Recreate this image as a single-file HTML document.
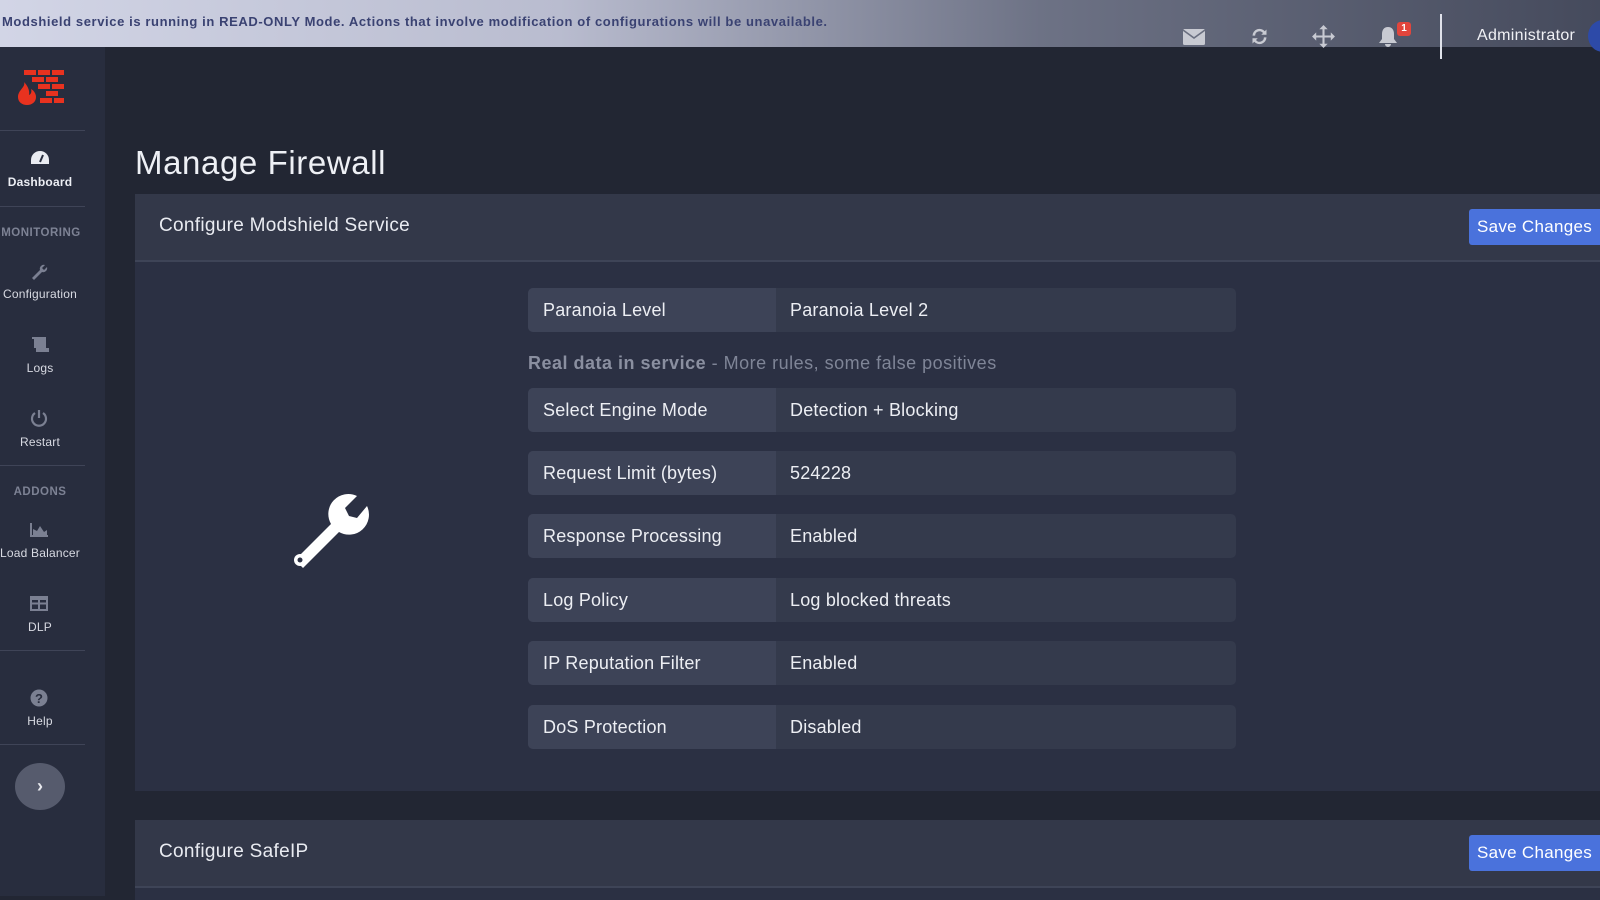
<!DOCTYPE html>
<html><head><meta charset="utf-8"><style>
*{margin:0;padding:0;box-sizing:border-box}
body{width:1600px;height:896px;overflow:hidden;background:#222633;font-family:"Liberation Sans",sans-serif;position:relative;color:#e8eaf0}
.top{position:absolute;left:0;top:0;width:1600px;height:47px;background:linear-gradient(90deg,#d2d5e6 0%,#b9bccf 35%,#6d7285 65%,#454a5c 100%)}
.banner{position:absolute;left:2px;top:14px;font-size:13px;font-weight:bold;color:#3a4272;letter-spacing:0.6px}
.side{position:absolute;left:0;top:47px;width:105px;height:849px;background:#282d3e}
.hr{position:absolute;left:0;width:85px;height:1px;background:#3f4457}
.it{position:absolute;left:0;width:80px;text-align:center;font-size:12px;color:#d8dae2;letter-spacing:.2px}
.sec{position:absolute;left:0;width:80px;text-align:center;font-size:11.5px;font-weight:bold;color:#7d8294;letter-spacing:.5px}
.ic{position:absolute;left:30px}
h1{position:absolute;left:135px;top:144px;font-size:33px;font-weight:normal;color:#eef0f5;letter-spacing:.6px}
.card{position:absolute;left:135px;width:1465px;background:#2b3043}
.hd{position:absolute;left:0;top:0;width:100%;height:68px;background:#333849;border-bottom:2px solid #3e4457}
.hd span{position:absolute;left:24px;top:21px;font-size:19px;color:#e9ebf1;letter-spacing:.3px}
.btn{position:absolute;right:0;top:15px;width:131px;height:36px;background:#4a72dc;color:#fff;font-size:17px;line-height:36px;text-align:center;border-radius:3px 0 0 3px;letter-spacing:.3px}
.row{position:absolute;left:528px;width:708px;height:44px;border-radius:5px;overflow:hidden;background:#343a4c}
.row .l{position:absolute;left:0;top:0;width:248px;height:44px;background:#3d4357;padding-left:15px;line-height:44px;font-size:18px;color:#eceef3;letter-spacing:.2px}
.row .v{position:absolute;left:262px;top:0;line-height:44px;font-size:18px;color:#eceef3;letter-spacing:.2px}
.note{position:absolute;left:528px;top:353px;font-size:18px;color:#7f8597;letter-spacing:.5px}
</style></head><body>
<div class="top">
<div class="banner">Modshield service is running in READ-ONLY Mode. Actions that involve modification of configurations will be unavailable.</div>
<svg style="position:absolute;left:1183px;top:29px" width="22" height="16" viewBox="0 0 22 16"><rect x="0" y="0" width="22" height="16" rx="1.5" fill="#c8cad2"/><path d="M0 1 L11 9 L22 1" stroke="#6a6f80" stroke-width="1.6" fill="none"/></svg>
<svg style="position:absolute;left:1249px;top:26px" width="21" height="21" viewBox="0 0 24 24"><path d="M4 11a8 8 0 0 1 14-5l2-2v6h-6l2-2a5 5 0 0 0-9 3z M20 13a8 8 0 0 1-14 5l-2 2v-6h6l-2 2a5 5 0 0 0 9-3z" fill="#c8cad2"/></svg>
<svg style="position:absolute;left:1311px;top:24px" width="25" height="25" viewBox="0 0 24 24"><path d="M12 1l4 4h-3v6h6V8l4 4-4 4v-3h-6v6h3l-4 4-4-4h3v-6H5v3l-4-4 4-4v3h6V5H8z" fill="#c8cad2"/></svg>
<svg style="position:absolute;left:1378px;top:26px" width="20" height="22" viewBox="0 0 20 22"><path d="M10 1c-4 0-6 3-6 7v5l-3 4h18l-3-4V8c0-4-2-7-6-7z M7 18a3 3 0 0 0 6 0z" fill="#c8cad2"/></svg>
<div style="position:absolute;left:1397px;top:22px;width:14px;height:14px;background:#e2453c;border-radius:3px;color:#fff;font-size:10px;font-weight:bold;text-align:center;line-height:14px">1</div>
<div style="position:absolute;left:1440px;top:14px;width:2px;height:45px;background:#e0e2ea"></div>
<div style="position:absolute;left:1477px;top:27px;font-size:16px;color:#f0f1f5;letter-spacing:.3px">Administrator</div>
<div style="position:absolute;left:1588px;top:20px;width:30px;height:32px;border-radius:50%;background:#2d4aa8"></div>
</div>
<div class="side">
<svg style="position:absolute;left:14px;top:23px" width="50" height="36" viewBox="0 0 50 36"><g fill="#e8321f"><rect x="10" y="0" width="12" height="5"/><rect x="24" y="0" width="12" height="5"/><rect x="38" y="0" width="12" height="5"/><rect x="18" y="7" width="12" height="5"/><rect x="32" y="7" width="12" height="5"/><rect x="24" y="14" width="12" height="5"/><rect x="38" y="14" width="12" height="5"/><rect x="32" y="21" width="12" height="5"/><rect x="26" y="28" width="12" height="5"/><rect x="40" y="28" width="10" height="5"/><path d="M10 12c2 5-6 8-6 15 0 5 4 8 9 8s9-3 9-8c0-4-3-7-5-8 1 3 0 5-2 6 1-5-2-10-5-13z"/></g></svg>
</div>
<div class="hr" style="top:130px"></div>
<div class="hr" style="top:206px"></div>
<div class="hr" style="top:465px"></div>
<div class="hr" style="top:650px"></div>
<div class="hr" style="top:744px"></div>
<svg class="ic" style="top:150px" width="20" height="16" viewBox="0 0 20 16"><path d="M10 1a9 9 0 0 0-9 9v4h18v-4a9 9 0 0 0-9-9z" fill="#e9ebf1"/><path d="M10 12l3-7" stroke="#282d3e" stroke-width="2"/></svg>
<div class="it" style="top:175px;font-weight:bold;color:#eceef4">Dashboard</div>
<div class="sec" style="top:227px;left:0;width:82px">MONITORING</div>
<svg class="ic" style="top:262px" width="18" height="18" viewBox="0 0 18 18"><path d="M2 16l8-8a4 4 0 0 1 5-5l-3 3 2 2 3-3a4 4 0 0 1-5 5l-8 8z" fill="#7b8092"/></svg>
<div class="it" style="top:287px">Configuration</div>
<svg class="ic" style="top:336px" width="20" height="17" viewBox="0 0 20 17"><path d="M2 1h14v11h3v4H6v-4H4V3H2z" fill="#7b8092"/></svg>
<div class="it" style="top:361px">Logs</div>
<svg class="ic" style="top:409px" width="18" height="18" viewBox="0 0 18 18"><path d="M5 4a7 7 0 1 0 8 0" stroke="#7b8092" stroke-width="2.2" fill="none"/><path d="M9 1v8" stroke="#7b8092" stroke-width="2.2"/></svg>
<div class="it" style="top:435px">Restart</div>
<div class="sec" style="top:486px">ADDONS</div>
<svg class="ic" style="top:523px" width="18" height="14" viewBox="0 0 18 14"><path d="M1 0v13h17" stroke="#7b8092" stroke-width="2" fill="none"/><path d="M3 12V6l4 2 3-5 4 6 3-2v5z" fill="#7b8092"/></svg>
<div class="it" style="top:546px;left:-2px;width:84px">Load Balancer</div>
<svg class="ic" style="top:596px" width="18" height="15" viewBox="0 0 18 15"><rect x="1" y="1" width="16" height="13" fill="none" stroke="#7b8092" stroke-width="2"/><path d="M1 7.5h16M9 4v10M1 3h16" stroke="#7b8092" stroke-width="2"/></svg>
<div class="it" style="top:620px">DLP</div>
<svg class="ic" style="top:689px" width="18" height="18" viewBox="0 0 18 18"><circle cx="9" cy="9" r="8.5" fill="#7b8092"/><text x="9" y="14" font-size="13" font-weight="bold" text-anchor="middle" fill="#282d3e" font-family="Liberation Sans">?</text></svg>
<div class="it" style="top:714px">Help</div>
<div style="position:absolute;left:15px;top:763px;width:50px;height:47px;border-radius:50%;background:#565b6d;color:#e8e9ee;text-align:center;line-height:46px;font-size:18px;font-weight:bold">›</div>

<h1>Manage Firewall</h1>
<div class="card" style="top:194px;height:597px">
<div class="hd"><span>Configure Modshield Service</span><div class="btn">Save Changes</div></div>
</div>
<svg style="position:absolute;left:287px;top:488px" width="84" height="80" viewBox="0 0 84 80"><path d="M8 72 L44 36 A20 20 0 0 1 70 8 L58 20 L62 28 L70 30 L80 18 A20 20 0 0 1 52 44 L16 80 Z" fill="#fff"/><circle cx="13" cy="72" r="6" fill="#fff"/><circle cx="13" cy="72" r="2.5" fill="#2b3043"/></svg>
<div class="row" style="top:288px"><div class="l">Paranoia Level</div><div class="v">Paranoia Level 2</div></div>
<div class="note"><b style="color:#8a8fa0">Real data in service</b> - More rules, some false positives</div>
<div class="row" style="top:388px"><div class="l">Select Engine Mode</div><div class="v">Detection + Blocking</div></div>
<div class="row" style="top:451px"><div class="l">Request Limit (bytes)</div><div class="v">524228</div></div>
<div class="row" style="top:514px"><div class="l">Response Processing</div><div class="v">Enabled</div></div>
<div class="row" style="top:578px"><div class="l">Log Policy</div><div class="v">Log blocked threats</div></div>
<div class="row" style="top:641px"><div class="l">IP Reputation Filter</div><div class="v">Enabled</div></div>
<div class="row" style="top:705px"><div class="l">DoS Protection</div><div class="v">Disabled</div></div>
<div class="card" style="top:820px;height:80px">
<div class="hd"><span>Configure SafeIP</span><div class="btn">Save Changes</div></div>
</div>
</body></html>
